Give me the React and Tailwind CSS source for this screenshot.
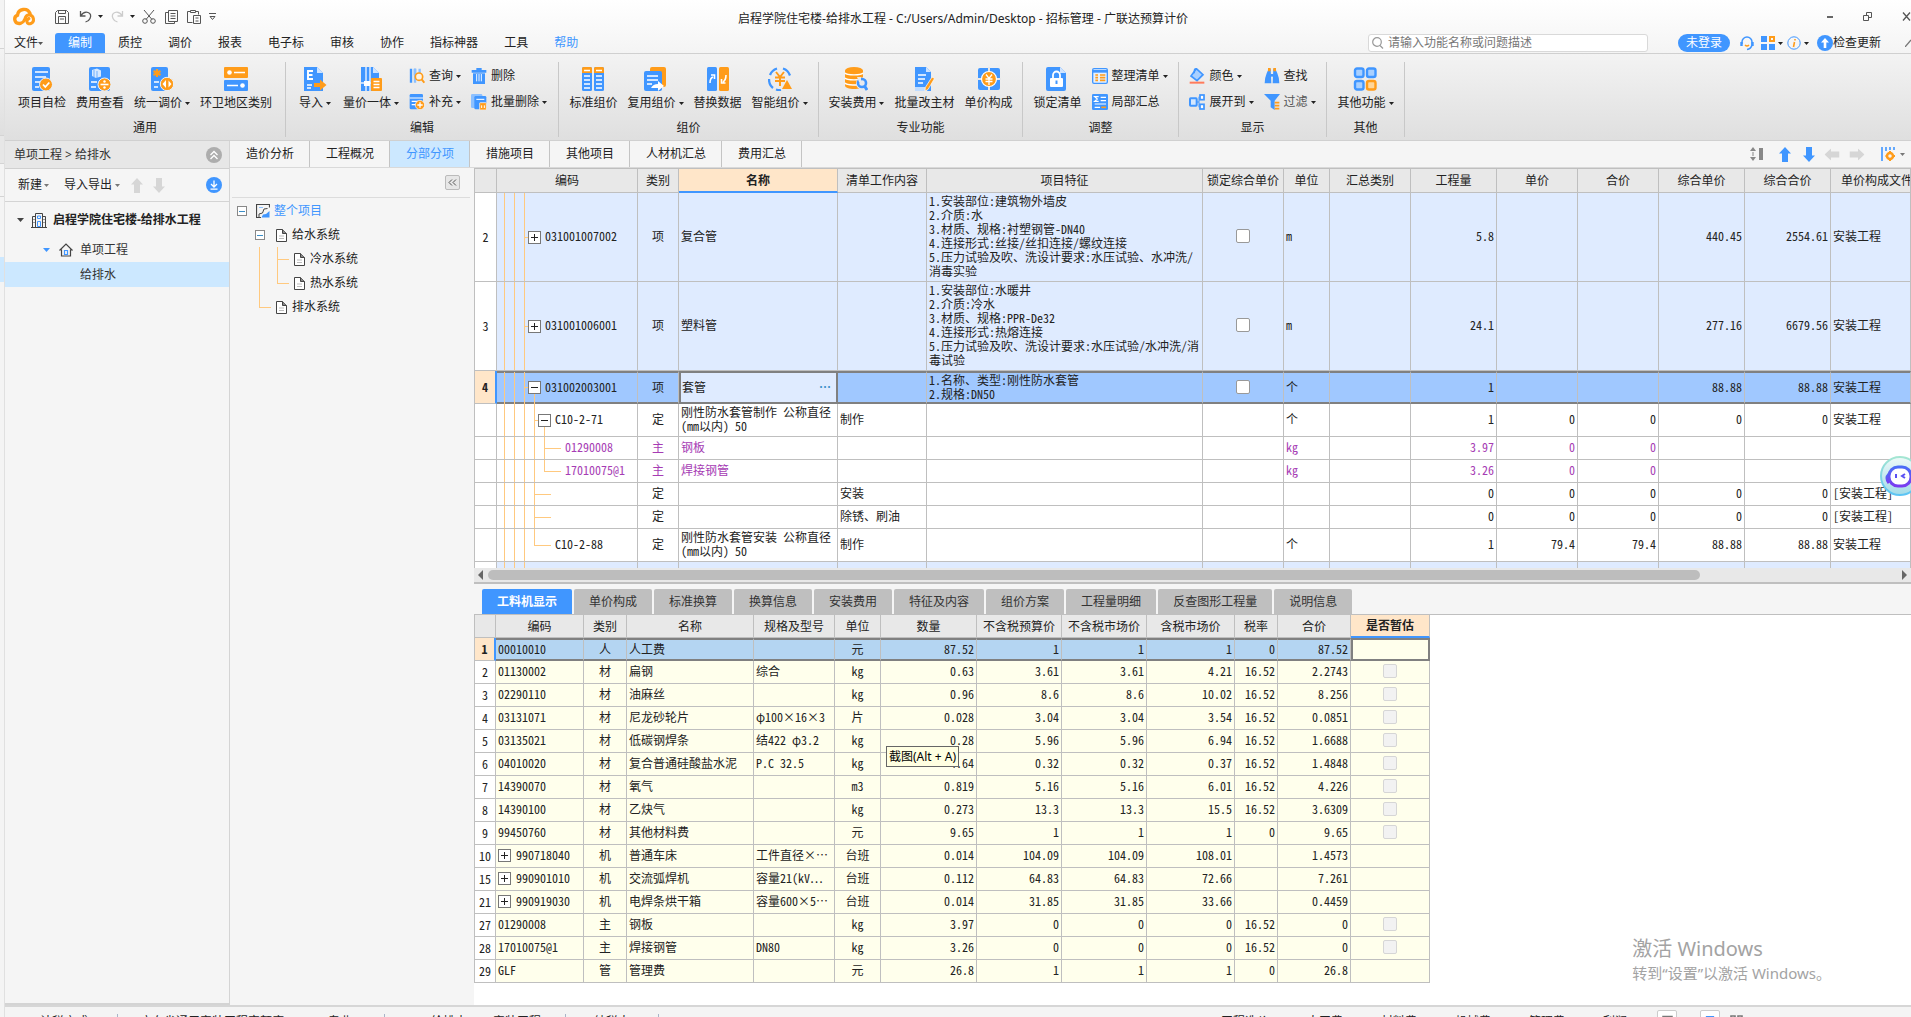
import { useState } from 'react';
import clsx from 'clsx';

const BLUE = '#4096ff';
const ORANGE = '#ff9c1a';

// Ribbon glyphs, all on a 24x24 canvas
const glyphs = {
  check: (
    <>
      <rect x="2" y="0" width="18" height="24" rx="2" fill={BLUE} />
      <path d="M5 5h13M5 10h11M5 15h5M5 20h4" stroke="#fff" strokeWidth="1.6" />
      <circle cx="16" cy="17.5" r="6.5" fill={ORANGE} stroke="#e8f2ff" strokeWidth="1" />
      <path d="M13 17.5l2.3 2.5 4-4.5" stroke="#fff" strokeWidth="1.8" fill="none" />
    </>
  ),
  cost: (
    <>
      <rect x="1" y="0" width="21" height="24" rx="2" fill={BLUE} />
      <path d="M4 3l5-1.500 4 2v6l-5 1.500-4-2z" fill="#d5e8ff" />
      <path d="M6 3v7M9 4v7" stroke={BLUE} strokeWidth="0.7" />
      <path d="M3 15h6M3 20h5" stroke="#fff" strokeWidth="1.6" />
      <circle cx="16.500" cy="17.500" r="6.500" fill={ORANGE} stroke="#e8f2ff" />
      <path d="M12.500 17.500h8" stroke="#fff" strokeWidth="1.600" />
      <circle cx="16.500" cy="14.500" r="1.200" fill="#fff" />
      <circle cx="16.500" cy="20.500" r="1.200" fill="#fff" />
    </>
  ),
  adjust: (
    <>
      <rect x="1" y="0" width="17" height="24" rx="2" fill={BLUE} />
      <path d="M7 2v8M3.500 4l7 4M10.500 4l-7 4" stroke={ORANGE} strokeWidth="2.200" />
      <path d="M4 15h5M4 20h4" stroke="#fff" strokeWidth="1.600" />
      <circle cx="17" cy="17" r="6.700" fill={ORANGE} stroke="#e8f2ff" />
      <path d="M16 13v8l-3.500-4zM18.500 13.500l3 3.500-3 3.500z" fill="#fff" />
    </>
  ),
  region: (
    <>
      <rect x="0" y="0" width="24" height="11" rx="1" fill={ORANGE} />
      <rect x="0" y="13" width="24" height="11" rx="1" fill={BLUE} />
      <path d="M10 5.500h11M3 18.500h11" stroke="#fff" strokeWidth="1.600" />
      <circle cx="5.500" cy="5.500" r="2.300" fill="#fff" />
      <circle cx="18.500" cy="18.500" r="2.300" fill="#fff" />
    </>
  ),
  importE: (
    <>
      <path d="M1 0h13l6 6v18H1z" fill={BLUE} />
      <path d="M14 0l6 6h-6z" fill="#cfe4ff" />
      <path d="M10 4H5v8h5M5 8h4.500" stroke="#fff" strokeWidth="1.900" fill="none" />
      <path d="M4 18h5M4 21h4" stroke="#fff" strokeWidth="1.400" />
      <path d="M11 16h6v-3.500l6.500 5.500-6.500 5.500V20h-6z" fill={ORANGE} />
    </>
  ),
  amount: (
    <>
      <path d="M2 0h12l6 6v18H2z" fill={BLUE} />
      <path d="M14 0l6 6h-6z" fill="#cfe4ff" />
      <path d="M7 0v24M11 0v24M2 16h10" stroke="#e7f1ff" strokeWidth="1.400" />
      <rect x="5" y="14" width="6" height="5" fill="#fff" />
      <rect x="12" y="11" width="11" height="13" rx="1" fill={ORANGE} />
      <path d="M14.500 14.500h6M14.500 17.500h6M14.500 20.500h6" stroke="#fff" strokeWidth="1.300" />
    </>
  ),
  standard: (
    <>
      <rect x="1" y="0" width="10" height="24" rx="1.500" fill={BLUE} />
      <rect x="13" y="0" width="10" height="24" rx="1.500" fill={BLUE} />
      <path d="M1 1.500Q1 0 2.500 0h7Q11 0 11 1.500V6H1zM13 1.500Q13 0 14.500 0h7Q23 0 23 1.500V6H13z" fill={ORANGE} />
      <path d="M3 3.500h6M15 3.500h6M3 9h6M15 9h6M3 13h6M15 13h6M3 17h6M15 17h6M3 21h6M15 21h6" stroke="#fff" strokeWidth="1.300" />
    </>
  ),
  reuse: (
    <>
      <rect x="7" y="0" width="16" height="20" rx="2" fill={ORANGE} />
      <rect x="1" y="4" width="18" height="20" rx="2" fill={BLUE} />
      <path d="M4 9h11M4 13h11M4 17h5" stroke="#fff" strokeWidth="1.500" />
      <path d="M8 21q2-4 7-4v-3l6 5-6 5v-3q-4 0-7 0z" fill="#fff" />
    </>
  ),
  replace: (
    <>
      <rect x="1" y="0" width="10" height="24" rx="1.500" fill={BLUE} />
      <rect x="13" y="0" width="10" height="24" rx="1.500" fill={ORANGE} />
      <path d="M4 16q0-5 3-6M5 8h3.500v4M20 8q0 5-3 7M19.500 16h-4v-4" stroke="#fff" strokeWidth="1.600" fill="none" />
    </>
  ),
  smart: (
    <>
      <path d="M9 1.500A11 11 0 0 0 2 8M1 12q0 6 4 9M15 1.500q5 1.500 7 7M8 22.500q3 1 5 .5" stroke={BLUE} strokeWidth="2.300" fill="none" />
      <path d="M8 5l4 5 4-5M7 10.500h10M7 14h10M12 10v9" stroke={ORANGE} strokeWidth="2" fill="none" />
      <path d="M19 13l5 9H14z" fill={ORANGE} />
    </>
  ),
  install: (
    <>
      <path d="M1 3.500v15c0 2 4 3.500 9 3.500s9-1.500 9-3.500v-15z" fill={ORANGE} />
      <ellipse cx="10" cy="3.500" rx="9" ry="3.500" fill={ORANGE} />
      <path d="M1 6c2 2.500 16 2.500 18 0M1 11c2 2.500 16 2.500 18 0M1 16c2 2.500 14 2.500 15 1" stroke="#fff" strokeWidth="1.400" fill="none" />
      <circle cx="18" cy="16.500" r="6" fill="#e8eaee" />
      <circle cx="18" cy="16" r="4" fill="none" stroke={BLUE} strokeWidth="2.600" />
      <path d="M20.500 19l2.500 4" stroke={BLUE} strokeWidth="3" />
      <path d="M13 10h4v5h-2z" fill="#e8eaee" />
    </>
  ),
  material: (
    <>
      <path d="M3 0h11l5 5v19H3z" fill={BLUE} />
      <path d="M14 0l5 5h-5z" fill="#cfe4ff" />
      <path d="M3 20h12v4H3z" fill="#bfdcff" />
      <path d="M6 8h8M6 12h7M6 16h5" stroke="#fff" strokeWidth="1.500" />
      <path d="M20 10l2.500 1.500-6.500 11-3 1.500.3-3.500z" fill={ORANGE} stroke="#fff" strokeWidth="0.700" />
    </>
  ),
  compose: (
    <>
      <rect x="1" y="1" width="22" height="22" rx="2" fill={BLUE} />
      <path d="M12 0v24M0 12h24" stroke="#e8e8e8" strokeWidth="2" />
      <circle cx="12" cy="12" r="7.500" fill={ORANGE} stroke="#fff" strokeWidth="1.200" />
      <path d="M9 7.500l3 4 3-4M8.500 12h7M8.500 14.500h7M12 11.500V18" stroke="#fff" strokeWidth="1.300" fill="none" />
    </>
  ),
  lock: (
    <>
      <path d="M3 0h12l6 6v16q0 2-2 2H3q-2 0-2-2V2q0-2 2-2z" fill={BLUE} />
      <path d="M15 0l6 6h-6z" fill="#cfe4ff" />
      <rect x="5" y="11" width="13" height="9" rx="1" fill="#fff" />
      <path d="M8 11V8a3.500 3.500 0 0 1 7 0v3" stroke="#fff" strokeWidth="1.800" fill="none" />
      <path d="M11.500 13.500v3.500" stroke={BLUE} strokeWidth="2" />
    </>
  ),
  others: (
    <>
      <rect x="2" y="1.500" width="8.500" height="8.500" rx="2" fill="#a9d0ff" stroke={BLUE} strokeWidth="2.400" />
      <rect x="14" y="1.500" width="8.500" height="8.500" rx="2" fill="#a9d0ff" stroke={BLUE} strokeWidth="2.400" />
      <rect x="2" y="14" width="8.500" height="8.500" rx="2" fill="#a9d0ff" stroke={BLUE} strokeWidth="2.400" />
      <rect x="14" y="14" width="8.500" height="8.500" rx="2" fill="#ffd699" stroke={ORANGE} strokeWidth="2.400" />
    </>
  ),
  query: (
    <>
      <path d="M3 1v21M9 1v10" stroke={BLUE} strokeWidth="3.500" />
      <path d="M9 1v21M16 1v7" stroke="#8cc0ff" strokeWidth="3.500" />
      <circle cx="15" cy="13" r="5.500" fill="#fff3e0" stroke={ORANGE} strokeWidth="2.500" />
      <path d="M19 17l4 5" stroke={ORANGE} strokeWidth="3" />
    </>
  ),
  trash: (
    <>
      <path d="M1 3h7V0h8v3h7v4H1z" fill={BLUE} />
      <path d="M3 8h18v16H3z" fill={BLUE} />
      <path d="M8.500 9v11M12 9v11M15.500 9v11" stroke="#fff" strokeWidth="1.400" />
    </>
  ),
  supplement: (
    <>
      <rect x="1" y="0" width="20" height="23" rx="2" fill={BLUE} />
      <path d="M1 6h20M4 11h10M4 16h6" stroke="#fff" strokeWidth="1.800" />
      <circle cx="16.500" cy="16.500" r="7" fill={ORANGE} stroke="#fff" />
      <path d="M16.500 12.500v8M12.500 16.500h8" stroke="#fff" strokeWidth="2" />
    </>
  ),
  batchDelete: (
    <>
      <rect x="0" y="0" width="17" height="21" rx="2" fill="#8cc0ff" />
      <rect x="5" y="3" width="18" height="20" rx="2" fill={BLUE} />
      <path d="M8 8h12" stroke="#fff" strokeWidth="1.600" />
      <rect x="13" y="13" width="10" height="11" rx="1" fill={ORANGE} stroke="#fff" />
      <path d="M16 17v4M20 17v4" stroke="#fff" strokeWidth="1.500" />
    </>
  ),
  tidy: (
    <>
      <rect x="1" y="1" width="22" height="22" rx="2" fill="#e5f1ff" stroke={BLUE} strokeWidth="2" />
      <path d="M1 5h22" stroke={BLUE} strokeWidth="4" />
      <path d="M5 10.500h4M5 14.500h4M5 18.500h4M12 10.500h8M12 14.500h8M12 18.500h8" stroke={ORANGE} strokeWidth="2.400" />
    </>
  ),
  partial: (
    <>
      <rect x="0" y="0" width="24" height="24" rx="2" fill={BLUE} />
      <path d="M10 4H4l4 3.500L4 11h6M13 5h8M13 10h8M4 15h17M4 20h8" stroke="#fff" strokeWidth="1.800" fill="none" />
      <path d="M14 20h7" stroke={ORANGE} strokeWidth="2.400" />
    </>
  ),
  color: (
    <>
      <path d="M11 1l10 9-9 9-9-7z" fill="#a9d0ff" stroke={BLUE} strokeWidth="2.500" />
      <path d="M8 8V3q0-2 3-2" stroke={BLUE} strokeWidth="2" fill="none" />
      <path d="M1 22h22" stroke="#ff7c5c" strokeWidth="3" />
    </>
  ),
  find: (
    <>
      <path d="M7 1h3l1 22H1q0-8 3-15zM14 1h3l3 7q3 7 3 15H13z" fill={BLUE} />
      <path d="M6 0h4v5H6zM14 0h4v5h-4z" fill={ORANGE} />
      <path d="M10 9h4v4h-4z" fill={BLUE} />
    </>
  ),
  expand: (
    <>
      <rect x="1.500" y="6.500" width="10" height="11" rx="1" fill="#d5e8ff" stroke={BLUE} strokeWidth="3" />
      <path d="M12 12h3M15 4v16" stroke={BLUE} strokeWidth="1.500" />
      <rect x="16.500" y="1.500" width="6" height="7" fill="#fff" stroke={BLUE} strokeWidth="2.600" />
      <rect x="16.500" y="15.500" width="6" height="7" fill="#fff" stroke={BLUE} strokeWidth="2.600" />
    </>
  ),
  filter: (
    <>
      <path d="M0 0h24l-8 10v14l-6-4V10z" fill={BLUE} />
      <path d="M16 13h7M16 17.500h7M16 22h7" stroke={ORANGE} strokeWidth="2.400" />
    </>
  ),
};

const ribbon = [
  {
    label: '通用', width: 'w-[281px]',
    items: [
      { label: '项目自检', icon: 'check' },
      { label: '费用查看', icon: 'cost' },
      { label: '统一调价', icon: 'adjust', menu: true },
      { label: '环卫地区类别', icon: 'region' },
    ],
  },
  {
    label: '编辑', width: 'w-[273px]',
    items: [
      { label: '导入', icon: 'importE', menu: true },
      { label: '量价一体', icon: 'amount', menu: true },
      [{ label: '查询', icon: 'query', menu: true }, { label: '补充', icon: 'supplement', menu: true }],
      [{ label: '删除', icon: 'trash' }, { label: '批量删除', icon: 'batchDelete', menu: true }],
    ],
  },
  {
    label: '组价', width: 'w-[260px]',
    items: [
      { label: '标准组价', icon: 'standard' },
      { label: '复用组价', icon: 'reuse', menu: true },
      { label: '替换数据', icon: 'replace' },
      { label: '智能组价', icon: 'smart', menu: true },
    ],
  },
  {
    label: '专业功能', width: 'w-[204px]',
    items: [
      { label: '安装费用', icon: 'install', menu: true },
      { label: '批量改主材', icon: 'material' },
      { label: '单价构成', icon: 'compose' },
    ],
  },
  {
    label: '调整', width: 'w-[156px]',
    items: [
      { label: '锁定清单', icon: 'lock' },
      [{ label: '整理清单', icon: 'tidy', menu: true }, { label: '局部汇总', icon: 'partial' }],
    ],
  },
  {
    label: '显示', width: 'w-[148px]',
    items: [
      [{ label: '颜色', icon: 'color', menu: true }, { label: '展开到', icon: 'expand', menu: true }],
      [{ label: '查找', icon: 'find' }, { label: '过滤', icon: 'filter', menu: true, dim: true }],
    ],
  },
  { label: '其他', width: 'w-[78px]', items: [{ label: '其他功能', icon: 'others', menu: true }] },
];

const menus = ['质控', '调价', '报表', '电子标', '审核', '协作', '指标神器', '工具'];
const pageTabs = ['造价分析', '工程概况', '分部分项', '措施项目', '其他项目', '人材机汇总', '费用汇总'];
const detailTabs = ['工料机显示', '单价构成', '标准换算', '换算信息', '安装费用', '特征及内容', '组价方案', '工程量明细', '反查图形工程量', '说明信息'];

const billCols = [
  ['', 'w-[22px]'], ['编码', 'w-[141px]'], ['类别', 'w-[41px]'], ['名称', 'w-[159px]'], ['清单工作内容', 'w-[89px]'],
  ['项目特征', 'w-[276px]'], ['锁定综合单价', 'w-[81px]'], ['单位', 'w-[46px]'], ['汇总类别', 'w-[81px]'],
  ['工程量', 'w-[86px]'], ['单价', 'w-[81px]'], ['合价', 'w-[81px]'], ['综合单价', 'w-[86px]'], ['综合合价', 'w-[86px]'],
  ['单价构成文件', ''],
];

const TALL = { tr: 'h-[89px]', tree: 'h-[88px]' };
const MID = { tr: 'h-[33px]', tree: 'h-[32px]' };
const LOW = { tr: 'h-[23px]', tree: 'h-[22px]' };

const billRows = [
  {
    no: '2', size: TALL, depth: 2, toggle: '+', code: '031001007002', kind: '项', name: '复合管', tone: 'list', lock: true, unit: 'm',
    features: ['1.安装部位:建筑物外墙皮', '2.介质:水', '3.材质、规格:衬塑钢管-DN40', '4.连接形式:丝接/丝扣连接/螺纹连接', '5.压力试验及吹、洗设计要求:水压试验、水冲洗/', '消毒实验'],
    nums: ['5.8', '', '', '440.45', '2554.61'], file: '安装工程',
  },
  {
    no: '3', size: TALL, depth: 2, toggle: '+', code: '031001006001', kind: '项', name: '塑料管', tone: 'list', lock: true, unit: 'm',
    features: ['1.安装部位:水暖井', '2.介质:冷水', '3.材质、规格:PPR-De32', '4.连接形式:热熔连接', '5.压力试验及吹、洗设计要求:水压试验/水冲洗/消', '毒试验'],
    nums: ['24.1', '', '', '277.16', '6679.56'], file: '安装工程',
  },
  {
    no: '4', size: MID, depth: 2, toggle: '-', code: '031002003001', kind: '项', name: '套管', tone: 'active', lock: true, unit: '个',
    features: ['1.名称、类型:刚性防水套管', '2.规格:DN50'],
    nums: ['1', '', '', '88.88', '88.88'], file: '安装工程',
  },
  { size: MID, depth: 3, toggle: '-', code: 'C10-2-71', kind: '定', name: '刚性防水套管制作 公称直径(mm以内) 50', work: '制作', unit: '个', nums: ['1', '0', '0', '0', '0'], file: '安装工程' },
  { size: LOW, depth: 4, code: '01290008', kind: '主', name: '钢板', tone: 'main', unit: 'kg', nums: ['3.97', '0', '0', '', ''] },
  { size: LOW, depth: 4, last: true, code: '17010075@1', kind: '主', name: '焊接钢管', tone: 'main', unit: 'kg', nums: ['3.26', '0', '0', '', ''] },
  { size: LOW, depth: 3, kind: '定', work: '安装', nums: ['0', '0', '0', '0', '0'], file: '[安装工程]' },
  { size: LOW, depth: 3, kind: '定', work: '除锈、刷油', nums: ['0', '0', '0', '0', '0'], file: '[安装工程]' },
  { size: MID, depth: 3, last: true, code: 'C10-2-88', kind: '定', name: '刚性防水套管安装 公称直径(mm以内) 50', work: '制作', unit: '个', nums: ['1', '79.4', '79.4', '88.88', '88.88'], file: '安装工程' },
];

const resCols = [
  ['', 'w-[21px]'], ['编码', 'w-[88px]'], ['类别', 'w-[43px]'], ['名称', 'w-[127px]'], ['规格及型号', 'w-[81px]'],
  ['单位', 'w-[46px]'], ['数量', 'w-[96px]'], ['不含税预算价', 'w-[85px]'], ['不含税市场价', 'w-[85px]'],
  ['含税市场价', 'w-[88px]'], ['税率', 'w-[43px]'], ['合价', 'w-[73px]'], ['是否暂估', 'w-[79px]'],
];

// no, code, kind, name, spec, unit, [qty, price, market, taxed, rate, total], estimate box
const resRows = [
  ['1', '00010010', '人', '人工费', '', '元', ['87.52', '1', '1', '1', '0', '87.52'], false],
  ['2', '01130002', '材', '扁钢', '综合', 'kg', ['0.63', '3.61', '3.61', '4.21', '16.52', '2.2743'], true],
  ['3', '02290110', '材', '油麻丝', '', 'kg', ['0.96', '8.6', '8.6', '10.02', '16.52', '8.256'], true],
  ['4', '03131071', '材', '尼龙砂轮片', 'φ100×16×3', '片', ['0.028', '3.04', '3.04', '3.54', '16.52', '0.0851'], true],
  ['5', '03135021', '材', '低碳钢焊条', '结422 φ3.2', 'kg', ['0.28', '5.96', '5.96', '6.94', '16.52', '1.6688'], true],
  ['6', '04010020', '材', '复合普通硅酸盐水泥', 'P.C 32.5', 'kg', ['4.64', '0.32', '0.32', '0.37', '16.52', '1.4848'], true],
  ['7', '14390070', '材', '氧气', '', 'm3', ['0.819', '5.16', '5.16', '6.01', '16.52', '4.226'], true],
  ['8', '14390100', '材', '乙炔气', '', 'kg', ['0.273', '13.3', '13.3', '15.5', '16.52', '3.6309'], true],
  ['9', '99450760', '材', '其他材料费', '', '元', ['9.65', '1', '1', '1', '0', '9.65'], true],
  ['10', '990718040', '机', '普通车床', '工件直径×⋯', '台班', ['0.014', '104.09', '104.09', '108.01', '', '1.4573'], false],
  ['15', '990901010', '机', '交流弧焊机', '容量21(kV⋯', '台班', ['0.112', '64.83', '64.83', '72.66', '', '7.261'], false],
  ['21', '990919030', '机', '电焊条烘干箱', '容量600×5⋯', '台班', ['0.014', '31.85', '31.85', '33.66', '', '0.4459'], false],
  ['27', '01290008', '主', '钢板', '', 'kg', ['3.97', '0', '0', '0', '16.52', '0'], true],
  ['28', '17010075@1', '主', '焊接钢管', 'DN80', 'kg', ['3.26', '0', '0', '0', '16.52', '0'], true],
  ['29', 'GLF', '管', '管理费', '', '元', ['26.8', '1', '1', '1', '0', '26.8'], false],
];

function Caret({ className = 'text-[#222]' }) {
  return (
    <svg viewBox="0 0 5 3" className={clsx('h-[3px] w-[5px] shrink-0', className)}>
      <path d="M0 0h5L2.500 3z" fill="currentColor" />
    </svg>
  );
}

function Glyph({ name, className }) {
  return <svg viewBox="0 0 24 24" className={clsx('shrink-0', className)}>{glyphs[name]}</svg>;
}

function BigButton({ item }) {
  return (
    <button className="flex min-w-[46px] flex-col items-center gap-1 px-[5px]">
      <Glyph name={item.icon} className="h-6 w-6" />
      <span className="flex items-center gap-[3px] whitespace-nowrap leading-4">
        {item.label}
        {item.menu && <Caret />}
      </span>
    </button>
  );
}

function SmallColumn({ items }) {
  return (
    <div className="flex flex-col gap-2 px-[5px]">
      {items.map((item) => (
        <button key={item.label} className={clsx('flex h-[18px] items-center gap-1 whitespace-nowrap', item.dim && 'text-[#555]')}>
          <Glyph name={item.icon} className="h-4 w-4" />
          <span className="flex items-center gap-[3px]">
            {item.label}
            {item.menu && <Caret />}
          </span>
        </button>
      ))}
    </div>
  );
}

function Ribbon() {
  return (
    <div className="flex h-[88px] shrink-0 items-start border-y border-[#d0d0d0] bg-linear-to-b from-[#f3f3f3] to-[#dfdfdf]">
      {ribbon.map((group) => (
        <div key={group.label} className={clsx('mt-2 flex h-[75px] shrink-0 flex-col items-center border-r border-[#c8c8c8] pt-[5px]', group.width)}>
          <div className="flex h-[53px] items-start">
            {group.items.map((item, i) => (Array.isArray(item) ? <SmallColumn key={i} items={item} /> : <BigButton key={item.label} item={item} />))}
          </div>
          <div className="leading-4">{group.label}</div>
        </div>
      ))}
    </div>
  );
}

function TitleBar() {
  return (
    <div className="grid h-[33px] shrink-0 grid-cols-[1fr_auto_1fr] items-center">
      <div className="flex items-center pl-2 text-[#555]">
        <svg viewBox="0 0 24 20" className="h-5 w-6">
          <path d="M7 16.500H6a4.300 4.300 0 0 1-1.500-8.300A6.500 6.500 0 0 1 17 6.500" stroke={ORANGE} strokeWidth="3.400" fill="none" strokeLinecap="round" />
          <path d="M7 16.500q4-1 5-5t4.500-3.500a4.500 4.500 0 0 1 1.500 8.500q-3.500 1-4-1.500t2-3.500" stroke={ORANGE} strokeWidth="3" fill="none" strokeLinecap="round" />
        </svg>
        <button aria-label="保存" className="ml-[18px]">
          <svg viewBox="0 0 14 14" className="h-[14px] w-[14px]" fill="none" stroke="currentColor">
            <path d="M.5 2.500l2-2h9l2 2v11H.5zM3.500 13.500v-7h7v7M3.500.5v3h7v-3M5 9h4" />
          </svg>
        </button>
        <button aria-label="撤销" className="ml-[10px] flex items-center gap-[6px]">
          <svg viewBox="0 0 13 13" className="h-[13px] w-[13px]" fill="none" stroke="currentColor" strokeWidth="1.300">
            <path d="M1.500 1v5h5M1.500 6Q5 1 9 2.500t2 6Q10 11 6.500 12" />
          </svg>
          <Caret />
        </button>
        <button aria-label="恢复" className="ml-[8px] flex items-center gap-[6px] text-[#ccc]">
          <svg viewBox="0 0 13 13" className="h-[13px] w-[13px]" fill="none" stroke="currentColor" strokeWidth="1.300">
            <path d="M11.500 1v5h-5M11.500 6Q8 1 4 2.500t-2 6Q3 11 6.500 12" />
          </svg>
          <Caret />
        </button>
        <button aria-label="剪切" className="ml-[7px]">
          <svg viewBox="0 0 14 14" className="h-[14px] w-[14px]" fill="none" stroke="currentColor">
            <path d="M2 0l8 9.500M12 0L4 9.500" />
            <circle cx="3" cy="11" r="2.300" />
            <circle cx="11" cy="11" r="2.300" />
          </svg>
        </button>
        <button aria-label="复制" className="ml-[9px]">
          <svg viewBox="0 0 13 14" className="h-[14px] w-[13px]" fill="none" stroke="currentColor">
            <path d="M3.500.5h9v11h-9zM3.500 2.500h-3v11h9v-2M5.500 3.500h5M5.500 6h5M5.500 8.500h5" />
          </svg>
        </button>
        <button aria-label="粘贴" className="ml-[9px]">
          <svg viewBox="0 0 14 15" className="h-[15px] w-[14px]" fill="none" stroke="currentColor">
            <path d="M5.500 13.500h-5v-11h3M9 2.500h2.500v3M3.500 1.500h5v2h-5zM6.500 6.500h7v8h-7zM8.500 9h3M8.500 12h3" />
          </svg>
        </button>
        <button aria-label="更多" className="ml-2">
          <svg viewBox="0 0 7 8" className="h-2 w-[7px]" fill="none" stroke="currentColor">
            <path d="M0 .5h7M1 3.500h5L3.500 6.500z" />
          </svg>
        </button>
      </div>
      <h1 className="mt-1 whitespace-nowrap pl-[10px]">启程学院住宅楼-给排水工程 - C:/Users/Admin/Desktop - 招标管理 - 广联达预算计价</h1>
      <div className="flex items-center justify-end gap-[30px] text-[#555]">
        <button aria-label="最小化" className="h-[2px] w-[6px] bg-[#666]" />
        <button aria-label="还原">
          <svg viewBox="0 0 9 9" className="h-[9px] w-[9px]" fill="none" stroke="currentColor">
            <path d="M.5 3.500h5v5h-5zM3.500 3.500v-3h5v5h-3" />
          </svg>
        </button>
        <button aria-label="关闭">
          <svg viewBox="0 0 9 9" className="h-[9px] w-[9px]" fill="none" stroke="currentColor" strokeWidth="1.300">
            <path d="M1 .5l7 8M8 .5l-7 8" />
          </svg>
        </button>
      </div>
    </div>
  );
}

function MenuBar() {
  return (
    <div className="flex h-5 shrink-0 items-center">
      <button className="ml-[9px] mr-[12px] flex items-center">文件<Caret className="text-[#555]" /></button>
      <button className="h-5 w-[50px] rounded-t-[3px] bg-[#4096ff] text-white">编制</button>
      {menus.map((m) => (
        <button key={m} className="px-[13px]">{m}</button>
      ))}
      <button className="px-[13px] text-[#4096ff]">帮助</button>
      <label className="ml-auto mr-[30px] flex h-[18px] w-[280px] items-center gap-1 rounded-[3px] border border-[#d9d9d9] bg-white pl-[3px]">
        <svg viewBox="0 0 12 12" className="h-3 w-3 shrink-0" fill="none" stroke="#999" strokeWidth="1.200">
          <circle cx="5" cy="5" r="4.300" />
          <path d="M8 8.500l3 3" />
        </svg>
        <input aria-label="搜索" className="w-full bg-transparent outline-none placeholder:text-[#777]" placeholder="请输入功能名称或问题描述" />
      </label>
      <button className="h-[18px] w-[52px] rounded-full bg-[#4096ff] text-white">未登录</button>
      <button aria-label="客服" className="ml-[10px]">
        <svg viewBox="0 0 14 15" className="h-[15px] w-[14px]" fill="none" stroke={BLUE} strokeWidth="1.500">
          <path d="M2 8V6a5 5 0 0 1 10 0v3q-1 4-5 4.500" />
          <path d="M1.500 6v4M12.500 6v4" strokeWidth="2.400" />
          <path d="M5 9q2 2 4 0" stroke={ORANGE} />
        </svg>
      </button>
      <button aria-label="应用" className="ml-[7px] flex items-center gap-[3px]">
        <svg viewBox="0 0 14 14" className="h-[14px] w-[14px]">
          <path d="M0 0h6v6H0zM0 8h6v6H0zM8 8h6v6H8z" fill={BLUE} />
          <path d="M9 1h4v4H9z" fill="none" stroke={ORANGE} strokeWidth="2" />
        </svg>
        <Caret />
      </button>
      <button aria-label="信息" className="ml-1 flex items-center gap-[3px]">
        <svg viewBox="0 0 14 14" className="h-[14px] w-[14px]" fill="none">
          <circle cx="7" cy="7" r="6.200" stroke={BLUE} />
          <path d="M8 3v1.500M7.500 6L6.500 11" stroke={ORANGE} strokeWidth="1.600" />
        </svg>
        <Caret />
      </button>
      <button className="ml-2 mr-[24px] flex items-center whitespace-nowrap">
        <svg viewBox="0 0 16 16" className="h-4 w-4">
          <circle cx="8" cy="8" r="8" fill={BLUE} />
          <path d="M8 3l4 4.500H9.300V13H6.700V7.500H4z" fill="#fff" />
        </svg>
        检查更新
      </button>
      <svg viewBox="0 0 6 8" className="h-2 w-[6px]" fill="none" stroke="#777" strokeWidth="1.300">
        <path d="M0 8l6-7" />
      </svg>
    </div>
  );
}

function Arrow({ turn, className }) {
  return (
    <svg viewBox="0 0 12 15" className={clsx('h-[15px] w-3', turn, className)}>
      <path d="M6 0l6 6.500H9V15H3V6.500H0z" fill="currentColor" />
    </svg>
  );
}

function ProjectPanel() {
  return (
    <aside className="flex w-[225px] shrink-0 flex-col border-r border-b-2 border-[#d4d4d4] bg-[#f5f5f5]">
      <div className="flex h-7 items-center justify-between border-b border-[#d0d0d0] bg-[#e7e7e7] pl-[9px] pr-[7px] text-[#333]">
        <span>单项工程 &gt; 给排水</span>
        <button aria-label="收起">
          <svg viewBox="0 0 16 16" className="h-4 w-4">
            <circle cx="8" cy="8" r="8" fill="#adadad" />
            <path d="M4.500 8L8 4.500 11.500 8M4.500 12L8 8.500l3.500 3.500" stroke="#fff" strokeWidth="1.300" fill="none" />
          </svg>
        </button>
      </div>
      <div className="flex h-[33px] items-center border-b border-[#d4d4d4] pl-[13px] pr-[7px]">
        <button className="mr-[15px] flex items-center gap-[2px]">新建<Caret className="text-[#777]" /></button>
        <button className="mr-[11px] flex items-center gap-[3px]">导入导出<Caret className="text-[#777]" /></button>
        <button aria-label="上移" className="mr-[10px]"><Arrow className="text-[#d6d6d6]" /></button>
        <button aria-label="下移"><Arrow turn="rotate-180" className="text-[#d6d6d6]" /></button>
        <button aria-label="下载" className="ml-auto">
          <svg viewBox="0 0 16 16" className="h-4 w-4">
            <circle cx="8" cy="8" r="8" fill={BLUE} />
            <path d="M8 3.500v6M5 7l3 3 3-3M4.500 12.200h7" stroke="#fff" strokeWidth="1.300" fill="none" />
          </svg>
        </button>
      </div>
      <ul>
        <li className="flex h-[35px] items-center pl-3 font-bold text-[#222]">
          <svg viewBox="0 0 7 4" className="mr-[7px] h-1 w-[7px]"><path d="M0 0h7L3.500 4z" fill="#444" /></svg>
          <svg viewBox="0 0 16 16" className="mr-[6px] h-4 w-4" fill="none" stroke="#444">
            <path d="M4.500 15V1.500h7V15M1.500 15V4.500h3M14.500 15V4.500h-3M0 15.500h16" />
            <path d="M6.500 4v2.500h3V4zM6.500 9.500v5h3v-5z" stroke={BLUE} />
            <path d="M3 7v1M3 10v1M13 7v1M13 10v1" />
          </svg>
          启程学院住宅楼-给排水工程
        </li>
        <li className="flex h-[25px] items-center pl-[38px] text-[#333]">
          <svg viewBox="0 0 7 4" className="mr-[9px] h-1 w-[7px]"><path d="M0 0h7L3.500 4z" fill={BLUE} /></svg>
          <svg viewBox="0 0 14 14" className="mr-[7px] h-[14px] w-[14px]" fill="none" stroke="#444" strokeWidth="1.200">
            <path d="M.5 7.500L7 1l6.500 6.500M2.500 6.500v6.500h9V6.500" />
            <path d="M5.500 7.500h3v4h-3z" stroke={BLUE} />
          </svg>
          单项工程
        </li>
        <li className="flex h-[25px] items-center bg-[#cce8ff] pl-[75px] text-[#333]">给排水</li>
      </ul>
    </aside>
  );
}

// Elbow of the tree lines; the lower half is dropped on a last child
function Elbow({ last, width }) {
  return (
    <span className={clsx('flex h-full shrink-0 flex-col', width)}>
      <span className="flex-1 border-l border-[#ffc97f]" />
      <span className="h-px bg-[#ffc97f]" />
      <span className={clsx('flex-1', !last && 'border-l border-[#ffc97f]')} />
    </span>
  );
}

function MinusBox() {
  return (
    <button aria-label="折叠" className="flex h-[10px] w-[10px] shrink-0 items-center justify-center border border-[#888] bg-white">
      <span className="h-px w-[6px] bg-[#3c8fc8]" />
    </button>
  );
}

function DocIcon() {
  return (
    <svg viewBox="0 0 11 13" className="mr-[5px] h-[13px] w-[11px] shrink-0" fill="#fff" stroke="#444">
      <path d="M.5.5h6l4 4v8H.5z" />
      <path d="M6.500.5v4h4" fill="#888" />
      <path d="M3 7h5M3 9.500h5" stroke="#bbb" />
    </svg>
  );
}

function SectionTree() {
  return (
    <nav className="w-[244px] shrink-0 bg-[#f5f5f5]">
      <div className="ml-[2px] mr-1 flex h-[30px] items-center justify-end border-b border-[#dcdcdc] pr-[10px]">
        <button aria-label="收起目录" className="flex h-[15px] w-[15px] items-center justify-center rounded-[2px] border border-[#bbb] bg-[#e7e7e7]">
          <svg viewBox="0 0 9 7" className="h-[7px] w-[9px]" fill="none" stroke="#555"><path d="M4 .5l-3 3 3 3M8 .5l-3 3 3 3" /></svg>
        </button>
      </div>
      <ul className="pt-px">
        <li className="flex h-6 items-center pl-[7px] text-[#4096ff]">
          <MinusBox />
          <svg viewBox="0 0 14 14" className="ml-[9px] mr-1 h-[14px] w-[14px]" fill="none">
            <path d="M4 13.500H.5V.5h13V3.500" stroke="#444" strokeWidth="1.200" />
            <path d="M11.500 4.500L8 5 6.500 9 3 10v3.500h2" stroke="#444" />
            <path d="M5.500 13.500l1.500-3 3-.5 3.500-3v6.500z" fill={BLUE} />
            <path d="M3 3.500h4" stroke="#8cc0ff" />
          </svg>
          整个项目
        </li>
        <li className="flex h-6 items-center pl-[25px]"><MinusBox /><span className="w-[11px]" /><DocIcon />给水系统</li>
        <li className="flex h-6 items-center pl-[29px]">
          <span className="h-full w-[18px] border-l border-[#ffc97f]" />
          <Elbow width="w-3" /><span className="w-[5px]" /><DocIcon />冷水系统
        </li>
        <li className="flex h-6 items-center pl-[29px]">
          <span className="h-full w-[18px] border-l border-[#ffc97f]" />
          <Elbow last width="w-3" /><span className="w-[5px]" /><DocIcon />热水系统
        </li>
        <li className="flex h-6 items-center pl-[29px]"><Elbow last width="w-3" /><span className="w-[5px]" /><DocIcon />排水系统</li>
      </ul>
    </nav>
  );
}

function PageTabs() {
  const [current, setCurrent] = useState('分部分项');
  return (
    <div className="flex h-[27px] shrink-0 items-stretch border-b border-[#d9d9d9] bg-[#f5f5f5]">
      {pageTabs.map((t) => (
        <button
          key={t}
          onClick={() => setCurrent(t)}
          className={clsx('border-r border-[#c4c4c4] pl-4 pr-[15px] whitespace-nowrap', current === t && 'bg-[#cce8ff] text-[#4096ff]')}
        >
          {t}
        </button>
      ))}
      <div className="ml-auto flex items-center pr-[6px] text-[#4096ff]">
        <button aria-label="行高">
          <svg viewBox="0 0 14 14" className="h-[14px] w-[14px]" fill="#888">
            <path d="M3 0l3 4H0zM3 14l-3-4h6zM2.500 5h1v4h-1zM9 1h4v12H9z" />
          </svg>
        </button>
        <button aria-label="上移" className="ml-[15px]"><Arrow /></button>
        <button aria-label="下移" className="ml-3"><Arrow turn="rotate-180" /></button>
        <button aria-label="升级" className="ml-[11px]"><Arrow turn="-rotate-90" className="text-[#d6d6d6]" /></button>
        <button aria-label="降级" className="ml-[13px]"><Arrow turn="rotate-90" className="text-[#d6d6d6]" /></button>
        <button aria-label="列设置" className="ml-[18px] flex items-center gap-[5px]">
          <svg viewBox="0 0 14 14" className="h-[14px] w-[14px]" fill="none">
            <path d="M1 0v14M5 0v4M9 0v3M13 0v3" stroke={BLUE} strokeWidth="1.600" />
            <circle cx="9" cy="9" r="3" stroke={ORANGE} strokeWidth="2.500" />
            <path d="M9 4v2M9 12v2M4.500 9h2M11.500 9h2.500" stroke={ORANGE} strokeWidth="2" />
          </svg>
          <Caret className="text-[#777]" />
        </button>
      </div>
    </div>
  );
}

function Toggle({ sign, branch }) {
  return (
    <span className="flex h-full shrink-0 flex-col items-center">
      <span className="flex-1" />
      <button aria-label={sign === '+' ? '展开' : '折叠'} className="relative flex h-[13px] w-[13px] items-center justify-center border border-[#777] bg-white">
        <span className="h-px w-[7px] bg-[#222]" />
        {sign === '+' && <span className="absolute h-[7px] w-px bg-[#222]" />}
      </button>
      <span className={clsx('flex-1', branch && 'border-l border-[#ffc97f]')} />
    </span>
  );
}

function CodeTree({ row }) {
  return (
    <div className={clsx('flex items-center', row.size.tree)}>
      <span className="w-[7px] shrink-0" />
      {Array.from({ length: row.depth }, (_, i) => (
        <span key={i} className="h-full w-[10px] shrink-0 border-l border-[#ffc97f]" />
      ))}
      <Elbow last={row.last} width={row.toggle ? 'w-1' : 'w-[17px]'} />
      {row.toggle && <Toggle sign={row.toggle} branch={row.toggle === '-'} />}
      <span className="pb-[2px] pl-[4px]">{row.code}</span>
    </div>
  );
}

function ColumnHeads({ cols, active, height }) {
  return (
    <thead>
      <tr className={height}>
        {cols.map(([title, width], i) => (
          <th
            key={i}
            className={clsx(
              'overflow-hidden whitespace-nowrap border-r p-0 pb-px',
              width || 'pl-[10px] text-left',
              title === active ? 'border-b-2 border-r-[#bfbfbf] border-b-[#4096ff] bg-[#ffe6c9] font-bold' : 'border-b border-[#bfbfbf] bg-[#e8e8e8] font-normal',
            )}
          >
            {title}
          </th>
        ))}
      </tr>
    </thead>
  );
}

const rowTone = { list: 'bg-[#dfebff]', active: 'bg-[#a0c8ff]' };

function BillTable() {
  return (
    <table className="w-full table-fixed border-separate border-spacing-0 border-t border-l border-[#bfbfbf] bg-white font-['Noto_Sans_CJK_SC',sans-serif] leading-[14px] [font-feature-settings:'hwid']">
      <ColumnHeads cols={billCols} active="名称" height="h-6" />
      <tbody>
        {billRows.map((row, r) => {
          const on = row.tone === 'active';
          const edge = on ? 'border-y-2 border-r border-y-[#808080] border-r-[#bfbfbf]' : 'border-r border-b border-[#bfbfbf]';
          const cell = clsx('px-[2px] pt-0', on ? 'pb-px' : 'pb-[2px]', edge, rowTone[row.tone]);
          return (
            <tr key={r} className={clsx(row.size.tr, row.tone === 'main' && 'text-[#a63cb4]')}>
              <td className={clsx('border-b border-[#bfbfbf] p-0 text-center', on ? 'border-r-2 border-r-[#4096ff] bg-[#ffe6c9] font-bold' : 'border-r')}>{row.no}</td>
              <td className={clsx('p-0', edge, rowTone[row.tone])}><div className={clsx(on && '-my-1')}><CodeTree row={row} /></div></td>
              <td className={clsx(cell, 'text-center')}>{row.kind}</td>
              <td className={on ? 'border-2 border-[#808080] bg-[#dfebff] px-px pt-0 pb-px' : cell}>
                <span className="flex items-center justify-between">
                  {row.name}
                  {on && <button aria-label="选择" className="mr-1 font-bold text-[#3c8fc8]">⋯</button>}
                </span>
              </td>
              <td className={cell}>{row.work}</td>
              <td className={clsx(cell, 'overflow-hidden whitespace-nowrap')}>{row.features?.map((f) => <div key={f}>{f}</div>)}</td>
              <td className={clsx(cell, 'text-center')}>
                {row.lock && <input type="checkbox" aria-label={`锁定 ${row.code}`} className="mx-auto block h-[14px] w-[14px] appearance-none rounded-[2px] border border-[#999] bg-white" />}
              </td>
              <td className={cell}>{row.unit}</td>
              <td className={cell} />
              {row.nums.map((n, i) => (
                <td key={i} className={clsx(cell, 'text-right')}>{n}</td>
              ))}
              <td className={clsx(cell, 'overflow-hidden whitespace-nowrap')}>{row.file}</td>
            </tr>
          );
        })}
        <tr className="h-[6px]">
          {billCols.map((_, i) => (
            <td key={i} className={clsx('border-r border-[#bfbfbf] p-0', i > 0 && 'bg-[#dfebff]')}>
              {i === 1 && (
                <div className="flex h-[6px] pl-[7px]">
                  <span className="w-[10px] border-l border-[#ffc97f]" />
                  <span className="w-[10px] border-l border-[#ffc97f]" />
                  <span className="w-[10px] border-l border-[#ffc97f]" />
                </div>
              )}
            </td>
          ))}
        </tr>
      </tbody>
    </table>
  );
}

function ResourceTable() {
  return (
    <table className="w-[956px] table-fixed border-separate border-spacing-0 border-l border-[#bfbfbf] font-['Noto_Sans_CJK_SC',sans-serif] leading-[14px] [font-feature-settings:'hwid']">
      <ColumnHeads cols={resCols} active="是否暂估" height="h-[23px]" />
      <tbody>
        {resRows.map(([no, code, kind, name, spec, unit, nums, box], r) => {
          const on = r === 0;
          const cell = clsx('overflow-hidden whitespace-nowrap px-[2px] pt-0 pb-[2px]', on ? 'border-y-2 border-r border-y-[#808080] border-r-[#bfbfbf] bg-[#b4d5f2]' : 'border-r border-b border-[#bfbfbf] bg-[#ffffec]');
          return (
            <tr key={no} className="h-[23px]">
              <td className={clsx('border-b border-[#bfbfbf] p-0 text-center', on ? 'border-r-2 border-r-[#4096ff] bg-[#ffe6c9] font-bold' : 'border-r bg-white')}>{no}</td>
              <td className={cell}>
                <span className="flex items-center gap-[5px]">
                  {kind === '机' && <Toggle sign="+" />}
                  {code}
                </span>
              </td>
              <td className={clsx(cell, 'text-center')}>{kind}</td>
              <td className={cell}>{name}</td>
              <td className={cell}>{spec}</td>
              <td className={clsx(cell, 'text-center')}>{unit}</td>
              {nums.map((n, i) => (
                <td key={i} className={clsx(cell, 'text-right')}>{n}</td>
              ))}
              <td className={on ? 'border-2 border-[#808080] bg-[#ffffec] p-0' : cell}>
                {box && <input type="checkbox" disabled aria-label={`暂估 ${name}`} className="mx-auto block h-[14px] w-[14px] appearance-none rounded-[2px] border border-[#d6d6d6] bg-[#f2f2f2]" />}
              </td>
            </tr>
          );
        })}
      </tbody>
    </table>
  );
}

function DetailPane() {
  const [current, setCurrent] = useState('工料机显示');
  return (
    <section className="relative flex flex-1 flex-col bg-white">
      <div className="flex h-[31px] shrink-0 items-end gap-[2px] border-b border-[#bfbfbf] bg-[#f5f5f5] pl-2">
        {detailTabs.map((t) => (
          <button
            key={t}
            onClick={() => setCurrent(t)}
            className={clsx('h-[25px] whitespace-nowrap rounded-t-[2px] px-[15px]', current === t ? 'bg-[#4096ff] font-bold text-white' : 'bg-[#bfbfbf] text-[#333]')}
          >
            {t}
          </button>
        ))}
      </div>
      <ResourceTable />
      <div role="tooltip" className="absolute left-[412px] top-[162px] flex h-[21px] items-center whitespace-nowrap border border-[#666] bg-[#ffffe1] px-[2px] text-black">
        截图(Alt + A)
      </div>
      <div className="absolute bottom-[22px] right-[80px] text-[#a3a3a3]">
        <div className="text-[20px] leading-7">激活 Windows</div>
        <div className="text-[15px] leading-5">转到“设置”以激活 Windows。</div>
      </div>
    </section>
  );
}

function ScrollBar() {
  return (
    <div className="flex h-[14px] shrink-0 items-center bg-[#e8e8e8]">
      <svg viewBox="0 0 14 10" className="h-[10px] w-[14px]"><path d="M9 0v10L4 5z" fill="#666" /></svg>
      <div className="flex-1"><div className="h-[10px] w-[86%] rounded-full bg-[#bdbdbd]" /></div>
      <svg viewBox="0 0 14 10" className="h-[10px] w-[14px]"><path d="M5 0v10l5-5z" fill="#666" /></svg>
    </div>
  );
}

function Assistant() {
  return (
    <button aria-label="智能助手" className="absolute right-[-9px] top-[456px]">
      <svg viewBox="0 0 40 40" className="h-10 w-10">
        <defs>
          <linearGradient id="ring" x1="0" y1="0" x2="0" y2="1">
            <stop offset="0" stopColor="#a5e6d2" />
            <stop offset="1" stopColor="#5bc4f5" />
          </linearGradient>
          <linearGradient id="body" x1="0" y1="0" x2="0" y2="1">
            <stop offset="0" stopColor="#eefaf8" />
            <stop offset="1" stopColor="#a3dbe8" />
          </linearGradient>
          <linearGradient id="face" x1="0" y1="0" x2="0" y2="1">
            <stop offset="0" stopColor="#4a6cf7" />
            <stop offset="1" stopColor="#7a3cf0" />
          </linearGradient>
        </defs>
        <circle cx="20" cy="20" r="19" fill="url(#body)" stroke="url(#ring)" strokeWidth="2" />
        <path d="M9 18q-4 4 0 9" fill="none" stroke="url(#face)" strokeWidth="3" />
        <rect x="9" y="11" width="22" height="19" rx="9" fill="#fff" stroke="url(#face)" strokeWidth="3" />
        <path d="M16 18v4M25 18l-3 2 3 2" fill="none" stroke="#5b50f3" strokeWidth="2" />
      </svg>
    </button>
  );
}

function StatusBar() {
  return (
    <footer className="flex h-3 shrink-0 items-start overflow-hidden border-t-2 border-[#d6d6d6] bg-[#f4f4f4] leading-4 text-[#222]">
      <div className="flex pt-[7px]">
        <span className="border-r border-[#a9b4c8] pl-[35px] pr-[29px]">计税方式</span>
        <span className="flex gap-[44px] border-r border-[#a9b4c8] pl-[22px] pr-8"><span>广东省通用安装工程定额库</span><span>专业</span></span>
        <span className="flex gap-[26px] border-r border-[#a9b4c8] pl-[46px] pr-[24px]"><span>给排水</span><span>安装工程</span></span>
        <span className="border-r border-[#a9b4c8] px-[28px]">纳税人</span>
      </div>
      <div className="ml-auto flex gap-[38px] pt-[7px]">
        <span>工程造价</span><span>人工费</span><span>材料费</span><span>机械费</span><span>管理费</span><span>利润</span>
      </div>
      <div className="flex pl-[30px] pr-[74px] pt-[3px]">
        <svg viewBox="0 0 180 10" className="h-[10px] w-[180px]" fill="none">
          <path d="M.5 10V2q0-1.500 1.500-1.500h16q1.500 0 1.500 1.500v8M43.500 10V2q0-1.500 1.500-1.500h16q1.500 0 1.500 1.500v8" fill="#fff" stroke="#ccc" />
          <path d="M6 10V6.500h9V10" stroke="#777" strokeWidth="1.500" />
          <path d="M48 10l1-4h8l1 4z" fill={BLUE} />
          <path d="M74 10V6h4v4M81 10V6h4v4" stroke="#777" strokeWidth="1.600" />
        </svg>
      </div>
    </footer>
  );
}

export default function App() {
  return (
    <div className="relative flex h-screen overflow-hidden bg-[#f4f4f4] font-['Noto_Sans','Noto_Sans_CJK_SC',sans-serif] text-[12px] leading-4 text-[#222]">
      <div className="flex w-[5px] shrink-0 flex-col border-r border-[#e0e0e0] bg-[#f4f4f4]">
        <div className="h-[49px] border-b border-[#d4d4d4]" />
        <div className="h-[87px] border-b border-[#d4d4d4] bg-linear-to-b from-[#f3f3f3] to-[#dfdfdf]" />
        <div className="h-[28px] border-b border-[#d4d4d4] bg-[#e7e7e7]" />
        <div className="h-[33px] border-b border-[#d4d4d4]" />
        <div className="h-[60px]" />
        <div className="h-[25px] bg-[#cce8ff]" />
      </div>
      <div className="flex min-w-0 flex-1 flex-col">
        <header className="bg-linear-to-b from-white to-[#f4f4f4]">
          <TitleBar />
          <MenuBar />
        </header>
        <Ribbon />
        <div className="flex min-h-0 flex-1">
          <ProjectPanel />
          <div className="flex min-w-0 flex-1 flex-col">
            <PageTabs />
            <div className="flex min-h-0 flex-1">
              <SectionTree />
              <main className="flex min-w-0 flex-1 flex-col">
                <BillTable />
                <ScrollBar />
                <div className="h-[2px] shrink-0 bg-[#bfbfbf]" />
                <DetailPane />
              </main>
            </div>
          </div>
        </div>
        <StatusBar />
      </div>
      <Assistant />
    </div>
  );
}
